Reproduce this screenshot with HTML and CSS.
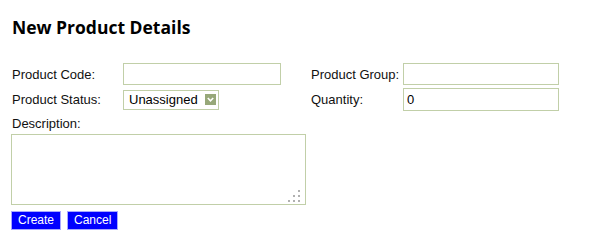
FILE: index.html
```html
<!DOCTYPE html>
<html>
<head>
<meta charset="utf-8">
<link rel="stylesheet" href="styles.css">
</head>
<body>
<h1 class="title">New Product Details</h1>
<form class="form">
  <div class="grid">
    <label class="lbl">Product Code:</label>
    <input class="field" type="text">
    <span></span>
    <label class="lbl">Product Group:</label>
    <input class="field" type="text">

    <label class="lbl">Product Status:</label>
    <div class="sel-wrap">
      <select class="sel"><option>Unassigned</option></select>
      <span class="sel-arrow"><svg width="11" height="11" viewBox="0 0 11 11"><rect width="11" height="11" fill="#97a879"/><path d="M2.8 4 L5.5 6.8 L8.2 4" fill="none" stroke="#fff" stroke-width="1.6"/></svg></span>
    </div>
    <span></span>
    <label class="lbl">Quantity:</label>
    <input class="field qty" type="text" value="0">
  </div>
  <div class="desc-lbl">Description:</div>
  <div class="ta-wrap">
    <textarea class="ta"></textarea>
    <span class="grip"><svg width="14" height="14" viewBox="0 0 14 14"><g fill="#b0b0b0"><rect x="10" y="1" width="2" height="2"/><rect x="5" y="6" width="2" height="2"/><rect x="10" y="6" width="2" height="2"/><rect x="0" y="11" width="2" height="2"/><rect x="5" y="11" width="2" height="2"/><rect x="10" y="11" width="2" height="2"/></g></svg></span>
  </div>
  <div class="actions">
    <button class="btn" type="button">Create</button>
    <button class="btn" type="button">Cancel</button>
  </div>
</form>
</body>
</html>
```
FILE: styles.css
```css
html, body {
  margin: 0;
  background: #fff;
}
body {
  padding: 15px 0 0 11px;
  font-family: "Liberation Sans", Arial, sans-serif;
  font-size: 13px;
  color: #000;
}
.title {
  margin: 0 0 24px 0;
  font-family: "Open Sans", sans-serif;
  font-weight: 700;
  font-size: 17.5px;
  line-height: 24px;
  padding-left: 1px;
}
.form {
  margin: 0;
}
.grid {
  display: grid;
  grid-template-columns: 112px 158px 29px 93px 156px;
  grid-template-rows: 22px 23px;
  row-gap: 3px;
  align-items: center;
}
.lbl {
  line-height: 15px;
  padding-left: 1px;
  color: #111;
}
.field {
  box-sizing: border-box;
  height: 22px;
  width: 100%;
  margin: 0;
  border: 1px solid #c1cfa8;
  padding: 0 3px;
  font-family: "Liberation Sans", Arial, sans-serif;
  font-size: 13px;
  color: #000;
  background: #fff;
  outline: none;
}
.qty {
  height: 23px;
}
.sel-wrap {
  position: relative;
  width: 96px;
  height: 20px;
}
.sel {
  appearance: none;
  -webkit-appearance: none;
  box-sizing: border-box;
  width: 96px;
  height: 20px;
  margin: 0;
  border: 1px solid #c1cfa8;
  border-radius: 0;
  padding: 0 0 0 5px;
  background: #fff;
  font-family: "Liberation Sans", Arial, sans-serif;
  font-size: 13px;
  color: #000;
}
.sel-arrow {
  position: absolute;
  right: 3px;
  top: 4px;
  width: 11px;
  height: 11px;
  pointer-events: none;
  line-height: 0;
}
.desc-lbl {
  margin-top: 5px;
  line-height: 15px;
  padding-left: 1px;
  color: #111;
}
.ta-wrap {
  position: relative;
  width: 295px;
  height: 71px;
  margin-top: 3px;
}
.ta {
  box-sizing: border-box;
  display: block;
  width: 295px;
  height: 71px;
  margin: 0;
  border: 1px solid #c1cfa8;
  resize: none;
  outline: none;
  background: #fff;
}
.grip {
  position: absolute;
  right: 4px;
  bottom: 2px;
  line-height: 0;
}
.actions {
  display: flex;
  gap: 6px;
  margin-top: 6px;
}
.btn {
  box-sizing: border-box;
  height: 19px;
  margin: 0;
  padding: 0 6px;
  border: 1px solid #a9a9ff;
  background: #0000ff;
  color: #fff;
  font-family: "Liberation Sans", Arial, sans-serif;
  font-size: 12px;
  line-height: 17px;
}
```
